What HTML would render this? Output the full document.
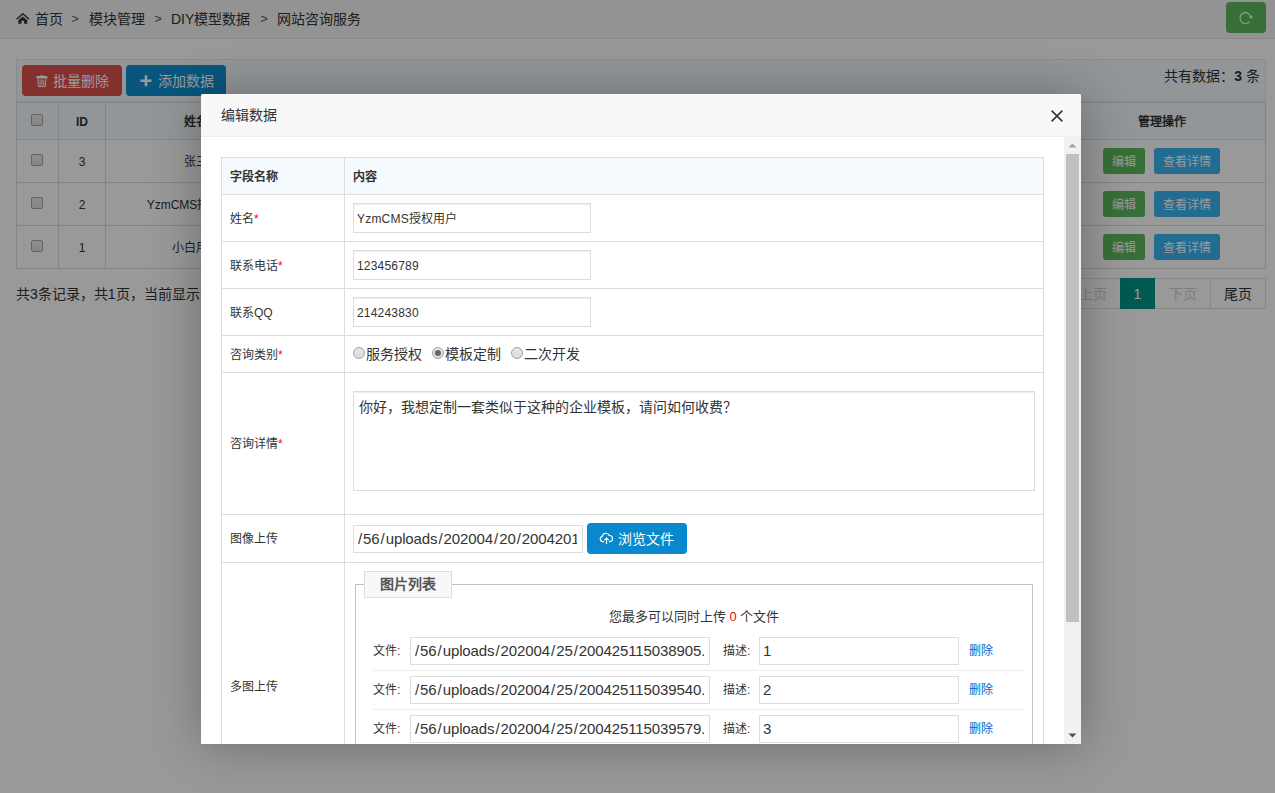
<!DOCTYPE html>
<html lang="zh-CN">
<head>
<meta charset="utf-8">
<title>网站咨询服务</title>
<style>
*{box-sizing:border-box;margin:0;padding:0}
html,body{width:1275px;height:793px;overflow:hidden;background:#fff}
body{font-family:"Liberation Sans",sans-serif;font-size:12px;color:#333;position:relative}
.a{position:absolute;white-space:nowrap}
#page{position:absolute;left:0;top:0;width:1275px;height:793px;overflow:hidden;background:#fff}
/* breadcrumb */
.crumb{left:0;top:0;width:1275px;height:39px;background:#f5f5f5;border-bottom:1px solid #e5e5e5}
.crumb .t{top:0;height:38px;line-height:38px;font-size:14px;color:#333}
.crumb .g{top:0;height:38px;line-height:38.5px;font-size:13px;color:#555;width:8px;text-align:center}
.refresh{left:1226px;top:2px;width:40px;height:31px;border-radius:4px;background:#5eb95e}
/* toolbar */
.tool{left:16px;top:59px;width:1250px;height:43px;background:#f5fafe;border:1px solid #e8e8e8}
.btn{height:31px;line-height:33px;border-radius:4px;color:#fff;font-size:14px}
.total{left:1100px;width:160px;top:66px;height:20px;line-height:20px;font-size:14px;text-align:right}
/* list table */
.tb{left:16px;top:102px;width:1250px;height:167px;border:1px solid #ddd}
.hl{height:1px;background:#ddd}
.vl{width:1px;background:#ddd}
.th{font-weight:bold;text-align:center;height:36px;line-height:38px;top:103px}
.td{text-align:center;height:42px;line-height:44px}
.cb{width:12px;height:12px;border:1px solid #a6a6a6;border-radius:2px;background:linear-gradient(#ededed,#dedede)}
.sb{height:26px;line-height:28px;border-radius:3px;color:#fff;font-size:12px;text-align:center}
.pg{top:278px;height:31px;line-height:31px;border:1px solid #e2e2e2;font-size:14px;text-align:center;background:#fff}
/* shade + modal */
.shade{left:0;top:0;width:1275px;height:793px;background:rgba(0,0,0,.4)}
.modal{left:201px;top:94px;width:880px;height:650px;background:#fff;border-radius:2px;box-shadow:1px 1px 50px rgba(0,0,0,.3)}
.mt{left:0;top:0;width:880px;height:43px;background:#f8f8f8;border-bottom:1px solid #eee;border-radius:2px 2px 0 0;font-size:14px;line-height:42px;padding-left:20px;color:#333}
.mc{left:0;top:43px;width:880px;height:607px;overflow:hidden;background:#fff}
.lab{left:29px;font-size:12px;padding-top:1px}
.lab b{color:#f00;font-weight:normal}
.in{border:1px solid #ddd;background:#fff;box-shadow:inset 0 1px 1px rgba(0,0,0,.075);overflow:hidden}
.in12{height:30px;line-height:28px;width:238px;left:152px;padding-left:3px;padding-top:1px;font-size:12px;letter-spacing:.2px}
.in15{height:28px;line-height:25px;padding-left:3px;font-size:15px;box-shadow:none;letter-spacing:-0.1px}
.in15 i{font-style:normal;padding:0 1px}
.in15:after{content:'';position:absolute;right:0;top:0;width:5px;height:100%;background:#fff}
.rd{width:12px;height:12px;border-radius:50%;border:1px solid #a2a2a2;background:linear-gradient(#e6e6e6,#dcdcdc)}
.rl{font-size:14px;height:20px;line-height:20px;top:207px}
.sep{left:172px;width:652px;height:1px;background:#eee}
.s12{font-size:12px;height:28px;line-height:28px}
.del{color:#06c}
</style>
</head>
<body>
<div id="page">

<!-- breadcrumb -->
<div class="a crumb">
  <svg class="a" style="left:16px;top:13.4px" width="13.6" height="10.7" viewBox="0 0 14 11"><path d="M0.6 6.4 L7 0.8 L13.4 6.4" fill="none" stroke="#333" stroke-width="1.5"/><path d="M7 3.6 L11.6 7.4 V11 H8.4 V8 H5.6 V11 H2.4 V7.4 Z" fill="#333"/></svg>
  <div class="a t" style="left:35px">首页</div>
  <div class="a g" style="left:71px">&gt;</div>
  <div class="a t" style="left:89px">模块管理</div>
  <div class="a g" style="left:154px">&gt;</div>
  <div class="a t" style="left:171px">DIY模型数据</div>
  <div class="a g" style="left:260px">&gt;</div>
  <div class="a t" style="left:277px">网站咨询服务</div>
  <div class="a refresh">
    <svg class="a" style="left:12px;top:8px" width="16" height="16" viewBox="0 0 16 16"><path d="M12.7 7.0 A5.4 5.4 0 1 0 11.5 11.6" fill="none" stroke="#fff" stroke-width="1.15"/><path d="M10.9 8.3 L15.1 8.0 L13.2 5.2 Z" fill="#fff"/></svg>
  </div>
</div>

<!-- toolbar -->
<div class="a tool"></div>
<div class="a btn" style="left:22px;top:65px;width:100px;background:#dd514c">
  <svg class="a" style="left:14px;top:9.8px" width="12" height="13" viewBox="0 0 12 13"><path d="M4.3 1.4 Q4.3 0.4 5.3 0.4 H6.7 Q7.7 0.4 7.7 1.4" fill="none" stroke="#fff" stroke-width="0.9"/><rect x="0.3" y="1.1" width="11.2" height="2.5" rx="1" fill="#fff"/><path d="M1.9 3.6 L2.4 11.6 H9.4 L9.9 3.6" fill="none" stroke="#fff" stroke-width="1"/><path d="M4.1 4.6 V10.8 M5.9 4.6 V10.8 M7.7 4.6 V10.8" stroke="#fff" stroke-width="0.95" fill="none"/></svg>
  <div class="a" style="left:31px;top:0">批量删除</div>
</div>
<div class="a btn" style="left:126px;top:65px;width:100px;background:#0e90d2">
  <svg class="a" style="left:14px;top:10px" width="12" height="12" viewBox="0 0 12 12"><path d="M6 0.3 V11.3 M0.5 5.8 H11.5" stroke="#fff" stroke-width="2.6" fill="none"/></svg>
  <div class="a" style="left:32px;top:0">添加数据</div>
</div>
<div class="a total">共有数据：<b>3</b> 条</div>

<!-- list table -->
<div class="a tb"></div>
<div class="a" style="left:17px;top:103px;width:1248px;height:36px;background:#f5fafe"></div>
<div class="a hl" style="left:17px;top:139px;width:1248px"></div>
<div class="a hl" style="left:17px;top:182px;width:1248px"></div>
<div class="a hl" style="left:17px;top:225px;width:1248px"></div>
<div class="a vl" style="left:58px;top:103px;height:165px"></div>
<div class="a vl" style="left:105px;top:103px;height:165px"></div>
<div class="a vl" style="left:286px;top:103px;height:165px"></div>
<div class="a vl" style="left:1058px;top:103px;height:165px"></div>

<div class="a cb" style="left:31px;top:114px"></div>
<div class="a cb" style="left:31px;top:154px"></div>
<div class="a cb" style="left:31px;top:197px"></div>
<div class="a cb" style="left:31px;top:240px"></div>

<div class="a th" style="left:59px;width:46px">ID</div>
<div class="a th" style="left:106px;width:180px">姓名</div>
<div class="a th" style="left:1059px;width:206px">管理操作</div>

<div class="a td" style="left:59px;width:46px;top:140px">3</div>
<div class="a td" style="left:59px;width:46px;top:183px">2</div>
<div class="a td" style="left:59px;width:46px;top:226px">1</div>
<div class="a td" style="left:106px;width:180px;top:140px">张三</div>
<div class="a td" style="left:106px;width:180px;top:183px">YzmCMS授权用户</div>
<div class="a td" style="left:106px;width:180px;top:226px">小白用户</div>

<div class="a sb" style="left:1103px;top:148px;width:42px;background:#5eb95e">编辑</div>
<div class="a sb" style="left:1154px;top:148px;width:66px;background:#3bb4f2">查看详情</div>
<div class="a sb" style="left:1103px;top:191px;width:42px;background:#5eb95e">编辑</div>
<div class="a sb" style="left:1154px;top:191px;width:66px;background:#3bb4f2">查看详情</div>
<div class="a sb" style="left:1103px;top:234px;width:42px;background:#5eb95e">编辑</div>
<div class="a sb" style="left:1154px;top:234px;width:66px;background:#3bb4f2">查看详情</div>

<div class="a" style="left:16px;top:284px;height:20px;line-height:20px;font-size:14px">共3条记录，共1页，当前显示第1页</div>
<div class="a pg" style="left:1011px;width:55px;color:#d2d2d2">首页</div>
<div class="a pg" style="left:1065px;width:56px;color:#d2d2d2">上页</div>
<div class="a pg" style="left:1155px;width:56px;color:#d2d2d2;border-left:none;padding-left:1px">下页</div>
<div class="a pg" style="left:1210px;width:56px;color:#333">尾页</div>
<div class="a pg" style="left:1120px;width:35px;background:#009688;border-color:#009688;color:#fff">1</div>

<!-- shade -->
<div class="a shade"></div>

<!-- modal -->
<div class="a modal">
  <div class="a mt">编辑数据</div>
  <svg class="a" style="left:850px;top:16px" width="12" height="12" viewBox="0 0 12 12"><path d="M0.6 0.6 L11.4 11.4 M11.4 0.6 L0.6 11.4" stroke="#2e2d3c" stroke-width="1.5" fill="none"/></svg>
  <div class="a mc">
    <!-- form table frame -->
    <div class="a" style="left:20px;top:20px;width:823px;height:720px;border:1px solid #ddd"></div>
    <div class="a" style="left:21px;top:21px;width:821px;height:36px;background:#f5fafe"></div>
    <div class="a hl" style="left:21px;top:57px;width:821px"></div>
    <div class="a hl" style="left:21px;top:104px;width:821px"></div>
    <div class="a hl" style="left:21px;top:151px;width:821px"></div>
    <div class="a hl" style="left:21px;top:198px;width:821px"></div>
    <div class="a hl" style="left:21px;top:235px;width:821px"></div>
    <div class="a hl" style="left:21px;top:377px;width:821px"></div>
    <div class="a hl" style="left:21px;top:425px;width:821px"></div>
    <div class="a vl" style="left:143px;top:21px;height:700px"></div>

    <!-- labels -->
    <div class="a lab" style="top:21px;height:36px;line-height:36px;font-weight:bold">字段名称</div>
    <div class="a lab" style="left:152px;top:21px;height:36px;line-height:36px;font-weight:bold">内容</div>
    <div class="a lab" style="top:58px;height:46px;line-height:46px">姓名<b>*</b></div>
    <div class="a lab" style="top:105px;height:46px;line-height:46px">联系电话<b>*</b></div>
    <div class="a lab" style="top:152px;height:46px;line-height:46px">联系QQ</div>
    <div class="a lab" style="top:199px;height:36px;line-height:36px">咨询类别<b>*</b></div>
    <div class="a lab" style="top:236px;height:141px;line-height:141px">咨询详情<b>*</b></div>
    <div class="a lab" style="top:378px;height:47px;line-height:47px">图像上传</div>
    <div class="a lab" style="top:426px;height:247px;line-height:247px">多图上传</div>

    <!-- text inputs -->
    <div class="a in in12" style="top:66px">YzmCMS授权用户</div>
    <div class="a in in12" style="top:113px">123456789</div>
    <div class="a in in12" style="top:160px">214243830</div>

    <!-- radios -->
    <div class="a rd" style="left:152px;top:210px"></div>
    <div class="a rl" style="left:165px">服务授权</div>
    <div class="a rd" style="left:231px;top:210px"><div class="a" style="left:2px;top:2px;width:6px;height:6px;border-radius:50%;background:#666"></div></div>
    <div class="a rl" style="left:244px">模板定制</div>
    <div class="a rd" style="left:310px;top:210px"></div>
    <div class="a rl" style="left:323px">二次开发</div>

    <!-- textarea -->
    <div class="a in" style="left:152px;top:254px;width:682px;height:100px;padding:5px 0 0 5px;font-size:14px;line-height:20px">你好，我想定制一套类似于这种的企业模板，请问如何收费？</div>

    <!-- image upload -->
    <div class="a in in15" style="left:152px;top:388px;width:230px"><i>/</i>56<i>/</i>uploads<i>/</i>202004<i>/</i>20<i>/</i>200420113421258.jpg</div>
    <div class="a btn" style="left:386px;top:386px;width:100px;background:#0888cd">
      <svg class="a" style="left:12px;top:9px" width="15" height="13" viewBox="0 0 15 13"><path d="M4.6 9.6 H3.6 A2.7 2.7 0 0 1 3.3 4.3 A3.6 3.6 0 0 1 10.2 3.5 A3.1 3.1 0 0 1 11.2 9.6 H10.4" fill="none" stroke="#fff" stroke-width="1.2" stroke-linecap="round"/><path d="M7.5 12 V6.4 M5.3 8.2 L7.5 6 L9.7 8.2" fill="none" stroke="#fff" stroke-width="1.2"/></svg>
      <div class="a" style="left:31px;top:0">浏览文件</div>
    </div>

    <!-- fieldset -->
    <div class="a" style="left:154px;top:447px;width:678px;height:260px;border:1px solid #c0c0c0"></div>
    <div class="a" style="left:163px;top:434px;width:88px;height:27px;line-height:25px;border:1px solid #ddd;background:#f8f8f8;text-align:center;font-size:14px;font-weight:bold;color:#555">图片列表</div>
    <div class="a" style="left:155px;top:470px;width:676px;height:20px;line-height:20px;font-size:13px;text-align:center">您最多可以同时上传 <span style="color:#f00">0</span> 个文件</div>

    <div class="a s12" style="left:172px;top:500px">文件:</div>
    <div class="a in in15" style="left:209px;top:500px;width:300px"><i>/</i>56<i>/</i>uploads<i>/</i>202004<i>/</i>25<i>/</i>200425115038905.jpg</div>
    <div class="a s12" style="left:522px;top:500px">描述:</div>
    <div class="a in in15" style="left:558px;top:500px;width:200px">1</div>
    <div class="a s12 del" style="left:768px;top:500px">删除</div>
    <div class="a sep" style="top:533px"></div>

    <div class="a s12" style="left:172px;top:539px">文件:</div>
    <div class="a in in15" style="left:209px;top:539px;width:300px"><i>/</i>56<i>/</i>uploads<i>/</i>202004<i>/</i>25<i>/</i>200425115039540.jpg</div>
    <div class="a s12" style="left:522px;top:539px">描述:</div>
    <div class="a in in15" style="left:558px;top:539px;width:200px">2</div>
    <div class="a s12 del" style="left:768px;top:539px">删除</div>
    <div class="a sep" style="top:572px"></div>

    <div class="a s12" style="left:172px;top:578px">文件:</div>
    <div class="a in in15" style="left:209px;top:578px;width:300px"><i>/</i>56<i>/</i>uploads<i>/</i>202004<i>/</i>25<i>/</i>200425115039579.jpg</div>
    <div class="a s12" style="left:522px;top:578px">描述:</div>
    <div class="a in in15" style="left:558px;top:578px;width:200px">3</div>
    <div class="a s12 del" style="left:768px;top:578px">删除</div>

    <!-- scrollbar -->
    <div class="a" style="left:863px;top:0;width:17px;height:607px;background:#f1f1f1"></div>
    <div class="a" style="left:865px;top:17px;width:13px;height:468px;background:#c1c1c1"></div>
    <svg class="a" style="left:867px;top:6px" width="9" height="5" viewBox="0 0 9 5"><path d="M0.5 4.5 L4.5 0.5 L8.5 4.5 Z" fill="#a3a3a3"/></svg>
    <svg class="a" style="left:867px;top:596px" width="9" height="5" viewBox="0 0 9 5"><path d="M0.5 0.5 L4.5 4.5 L8.5 0.5 Z" fill="#505050"/></svg>
  </div>
</div>

</div>
</body>
</html>
